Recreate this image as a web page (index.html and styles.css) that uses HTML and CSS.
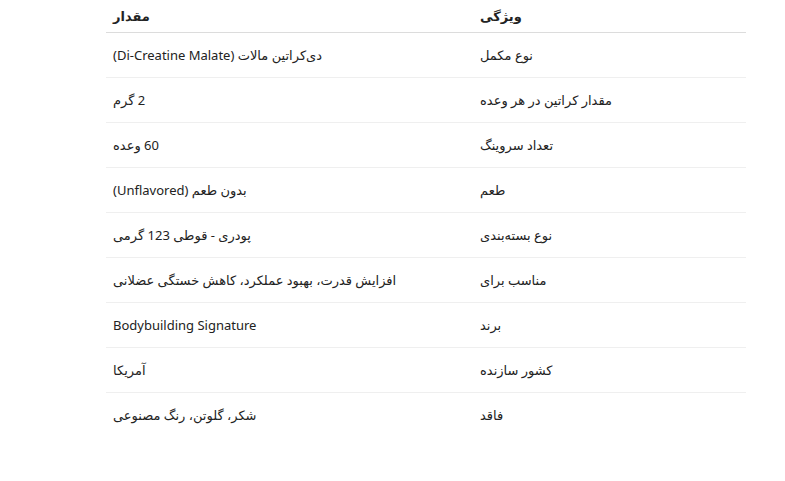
FILE: index.html
```html
<!DOCTYPE html>
<html lang="fa" dir="rtl">
<head>
<meta charset="utf-8">
<link rel="stylesheet" href="styles.css">
</head>
<body>
<div class="wrap">
<table class="spec">
<thead>
<tr><th class="c-key">ویژگی</th><th class="c-val">مقدار</th></tr>
</thead>
<tbody>
<tr><td>نوع مکمل</td><td>دی‌کراتین مالات (Di-Creatine Malate)</td></tr>
<tr><td>مقدار کراتین در هر وعده</td><td>2 گرم</td></tr>
<tr><td>تعداد سروینگ</td><td>60 وعده</td></tr>
<tr><td>طعم</td><td>بدون طعم (Unflavored)</td></tr>
<tr><td>نوع بسته‌بندی</td><td>پودری - قوطی 123 گرمی</td></tr>
<tr><td>مناسب برای</td><td>افزایش قدرت، بهبود عملکرد، کاهش خستگی عضلانی</td></tr>
<tr><td>برند</td><td>Bodybuilding Signature</td></tr>
<tr><td>کشور سازنده</td><td>آمریکا</td></tr>
<tr><td>فاقد</td><td>شکر، گلوتن، رنگ مصنوعی</td></tr>
</tbody>
</table>
</div>
</body>
</html>
```
FILE: styles.css
```css
html, body {
  margin: 0;
  padding: 0;
  background: #fff;
}
body {
  font-family: "Noto Sans", "DejaVu Sans", sans-serif;
  font-size: 13px;
  color: #222;
}
.wrap {
  width: 640px;
  margin-right: 39px;
}
.spec {
  width: 100%;
  border-collapse: collapse;
}
.spec th, .spec td {
  text-align: left;
  padding: 0 7px;
}
.spec th {
  height: 32px;
  font-weight: bold;
  border-bottom: 1px solid #dcdcdc;
}
.spec td {
  height: 44px;
  border-bottom: 1px solid #efefef;
}
.spec tbody tr:last-child td {
  border-bottom: none;
}
.c-key {
  width: 259px;
}
```
